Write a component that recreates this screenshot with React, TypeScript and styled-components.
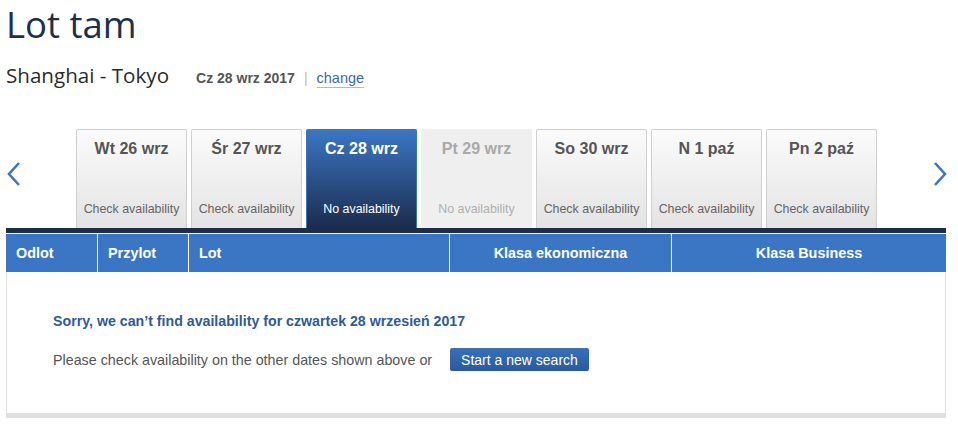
import React from "react";
import styled, { createGlobalStyle, css } from "styled-components";

const GlobalStyle = createGlobalStyle`
  body {
    margin: 0;
    background: #ffffff;
    font-family: "Liberation Sans", Arial, sans-serif;
  }
`;

type DayTab = {
  label: string;
  status: string;
  state: "normal" | "active" | "disabled";
};

const days: DayTab[] = [
  { label: "Wt 26 wrz", status: "Check availability", state: "normal" },
  { label: "Śr 27 wrz", status: "Check availability", state: "normal" },
  { label: "Cz 28 wrz", status: "No availability", state: "active" },
  { label: "Pt 29 wrz", status: "No availability", state: "disabled" },
  { label: "So 30 wrz", status: "Check availability", state: "normal" },
  { label: "N 1 paź", status: "Check availability", state: "normal" },
  { label: "Pn 2 paź", status: "Check availability", state: "normal" },
];

const Page = styled.div`
  width: 940px;
  padding: 0 6px;
`;

const Title = styled.h1`
  margin: 0;
  font-family: "Open Sans", "Noto Sans", sans-serif;
  font-weight: 400;
  font-size: 36.5px;
  line-height: 48px;
  color: #1c2f4e;
  white-space: nowrap;
`;

const RouteRow = styled.div`
  display: flex;
  align-items: baseline;
  margin-top: 13px;
  height: 28px;
`;

const Route = styled.span`
  font-family: "Open Sans", "Noto Sans", sans-serif;
  font-size: 20.6px;
  color: #2b2b2b;
  margin-right: 27px;
`;

const RouteDate = styled.span`
  font-size: 14px;
  font-weight: bold;
  color: #555555;
`;

const Divider = styled.span`
  font-size: 14px;
  color: #bbbbbb;
  margin: 0 9px;
`;

const ChangeLink = styled.a`
  font-size: 14.5px;
  color: #3a68ad;
  text-decoration: none;
  border-bottom: 1px solid #b8b8b8;
  padding-bottom: 1px;
`;

const DateStrip = styled.div`
  display: flex;
  align-items: center;
  margin-top: 40px;
  height: 99px;
`;

const ArrowButton = styled.button<{ side: "left" | "right" }>`
  display: flex;
  align-items: center;
  background: none;
  border: 0;
  padding: 0;
  cursor: pointer;
  height: 24px;
  margin-top: -9px;
  ${(props) =>
    props.side === "left"
      ? css`
          width: 70px;
          padding-left: 1px;
        `
      : css`
          flex: 1;
          justify-content: flex-end;
          margin-right: -1px;
        `}
`;

const Tabs = styled.div`
  display: flex;
  gap: 4px;
  align-self: stretch;
`;

const Tab = styled.div<{ state: DayTab["state"] }>`
  box-sizing: border-box;
  width: 111px;
  height: 99px;
  display: flex;
  flex-direction: column;
  align-items: center;
  border: 1px solid #cfcfcf;
  border-bottom: 0;
  border-radius: 2px 2px 0 0;
  background: linear-gradient(#fbfbfb, #e3e3e3);
  color: #555555;
  cursor: pointer;

  ${(props) =>
    props.state === "active" &&
    css`
      border-color: #3a74c2;
      background: linear-gradient(#3b76c4, #1b2c4d);
      color: #ffffff;
    `}

  ${(props) =>
    props.state === "disabled" &&
    css`
      border-color: #efefef;
      background: #efefef;
      color: #a9a9a9;
      cursor: default;
    `}
`;

const TabDate = styled.div`
  margin-top: 10px;
  font-size: 16px;
  font-weight: bold;
  line-height: 18px;
`;

const TabStatus = styled.div<{ state: DayTab["state"] }>`
  margin-top: auto;
  margin-bottom: 12px;
  font-size: 12.4px;
  line-height: 14px;
  white-space: nowrap;
  color: ${(props) =>
    props.state === "active"
      ? "#ffffff"
      : props.state === "disabled"
      ? "#b0b0b0"
      : "#666666"};
`;

const ResultsTable = styled.div`
  border-top: 5px solid #1b2c4c;
`;

const HeaderRow = styled.div`
  display: grid;
  grid-template-columns: 91px 91px 261px 222px 275px;
  height: 38px;
  margin-top: 1px;
  background: #3b76c4;
`;

const HeaderCell = styled.div<{ center?: boolean }>`
  display: flex;
  align-items: center;
  justify-content: ${(props) => (props.center ? "center" : "flex-start")};
  padding-left: ${(props) => (props.center ? "0" : "10px")};
  color: #ffffff;
  font-size: 14.4px;
  font-weight: bold;
  & + & {
    border-left: 1px solid #ffffff;
  }
`;

const Body = styled.div`
  box-sizing: border-box;
  height: 146px;
  border-left: 1px solid #dddddd;
  border-right: 1px solid #dddddd;
  border-bottom: 5px solid #e1e1e1;
  padding: 41px 0 0 46px;
`;

const Sorry = styled.div`
  font-size: 14.2px;
  font-weight: bold;
  color: #2f5a96;
`;

const HintRow = styled.div`
  display: flex;
  align-items: center;
  margin-top: 19px;
`;

const Hint = styled.span`
  font-size: 14.3px;
  color: #555555;
  margin-right: 18px;
`;

const SearchButton = styled.button`
  height: 23px;
  padding: 0 11px;
  border: 0;
  border-radius: 2px;
  background: linear-gradient(#3a70b8, #295a9e);
  color: #ffffff;
  font-family: "Liberation Sans", Arial, sans-serif;
  font-size: 14px;
  cursor: pointer;
`;

const Chevron = ({ side }: { side: "left" | "right" }) => (
  <svg width="14" height="24" viewBox="0 0 14 24">
    <path
      d={side === "left" ? "M12 1 L2 12 L12 23" : "M2 1 L12 12 L2 23"}
      fill="none"
      stroke="#3b76c4"
      strokeWidth="2.6"
    />
  </svg>
);

const App = () => {
  return (
    <Page>
      <GlobalStyle />
      <Title>Lot tam</Title>
      <RouteRow>
        <Route>Shanghai - Tokyo</Route>
        <RouteDate>Cz 28 wrz 2017</RouteDate>
        <Divider>|</Divider>
        <ChangeLink href="#">change</ChangeLink>
      </RouteRow>

      <DateStrip>
        <ArrowButton side="left" aria-label="Previous dates">
          <Chevron side="left" />
        </ArrowButton>
        <Tabs>
          {days.map((day) => (
            <Tab key={day.label} state={day.state}>
              <TabDate>{day.label}</TabDate>
              <TabStatus state={day.state}>{day.status}</TabStatus>
            </Tab>
          ))}
        </Tabs>
        <ArrowButton side="right" aria-label="Next dates">
          <Chevron side="right" />
        </ArrowButton>
      </DateStrip>

      <ResultsTable>
        <HeaderRow>
          <HeaderCell>Odlot</HeaderCell>
          <HeaderCell>Przylot</HeaderCell>
          <HeaderCell>Lot</HeaderCell>
          <HeaderCell center>Klasa ekonomiczna</HeaderCell>
          <HeaderCell center>Klasa Business</HeaderCell>
        </HeaderRow>
        <Body>
          <Sorry>Sorry, we can’t find availability for czwartek 28 wrzesień 2017</Sorry>
          <HintRow>
            <Hint>Please check availability on the other dates shown above or</Hint>
            <SearchButton>Start a new search</SearchButton>
          </HintRow>
        </Body>
      </ResultsTable>
    </Page>
  );
};

export default App;
